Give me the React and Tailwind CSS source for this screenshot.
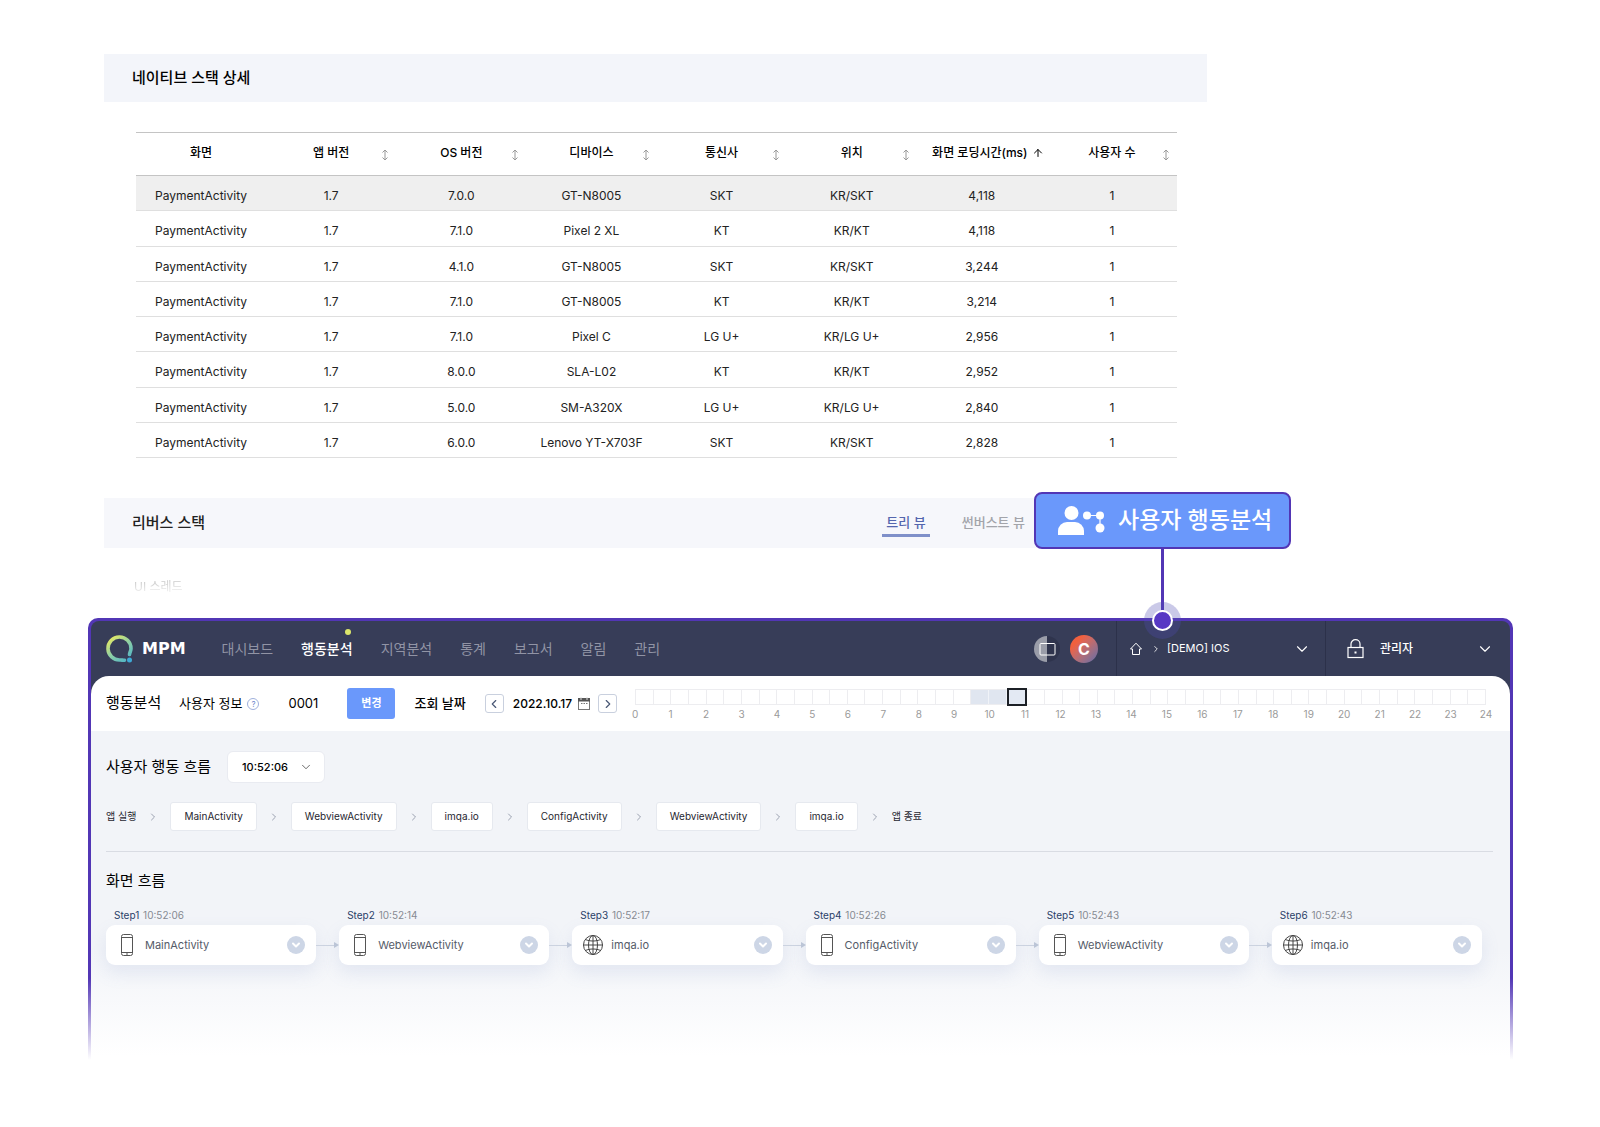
import React, { useState } from 'react';
import { ArrowUp, ChevronDown, ChevronLeft, ChevronRight } from 'lucide-react';

const columns = ['화면', '앱 버전', 'OS 버전', '디바이스', '통신사', '위치', '화면 로딩시간(ms)', '사용자 수'];

const rows = [
  ['PaymentActivity', '1.7', '7.0.0', 'GT-N8005', 'SKT', 'KR/SKT', '4,118', '1'],
  ['PaymentActivity', '1.7', '7.1.0', 'Pixel 2 XL', 'KT', 'KR/KT', '4,118', '1'],
  ['PaymentActivity', '1.7', '4.1.0', 'GT-N8005', 'SKT', 'KR/SKT', '3,244', '1'],
  ['PaymentActivity', '1.7', '7.1.0', 'GT-N8005', 'KT', 'KR/KT', '3,214', '1'],
  ['PaymentActivity', '1.7', '7.1.0', 'Pixel C', 'LG U+', 'KR/LG U+', '2,956', '1'],
  ['PaymentActivity', '1.7', '8.0.0', 'SLA-L02', 'KT', 'KR/KT', '2,952', '1'],
  ['PaymentActivity', '1.7', '5.0.0', 'SM-A320X', 'LG U+', 'KR/LG U+', '2,840', '1'],
  ['PaymentActivity', '1.7', '6.0.0', 'Lenovo YT-X703F', 'SKT', 'KR/SKT', '2,828', '1'],
];

const menus = ['대시보드', '행동분석', '지역분석', '통계', '보고서', '알림', '관리'];

const flow = ['MainActivity', 'WebviewActivity', 'imqa.io', 'ConfigActivity', 'WebviewActivity', 'imqa.io'];

const steps = [
  { name: 'MainActivity', time: '10:52:06', type: 'native' },
  { name: 'WebviewActivity', time: '10:52:14', type: 'native' },
  { name: 'imqa.io', time: '10:52:17', type: 'web' },
  { name: 'ConfigActivity', time: '10:52:26', type: 'native' },
  { name: 'WebviewActivity', time: '10:52:43', type: 'native' },
  { name: 'imqa.io', time: '10:52:43', type: 'web' },
];

const SortIcon = () => (
  <svg width="8" height="12" viewBox="0 0 8 12" fill="none" stroke="#999" strokeWidth="1">
    <path d="M4 1v10M1.5 3.5L4 1l2.500 2.500M1.500 8.500L4 11l2.500-2.500" />
  </svg>
);

const Logo = () => (
  <svg width="27" height="28" viewBox="0 0 27 28" fill="none">
    <defs>
      <linearGradient id="logoRing" x1="4" y1="2" x2="22" y2="26" gradientUnits="userSpaceOnUse">
        <stop offset="0" stopColor="#e9ea62" />
        <stop offset="0.5" stopColor="#8fd0a4" />
        <stop offset="1" stopColor="#4fb4c8" />
      </linearGradient>
    </defs>
    <path
      d="M18.500 25.200c-1.500.3-2.500-.3-4.500-.2A11.500 11.500 0 1 1 25 13.500c0 2.500-1.200 3.500-1.500 6"
      stroke="url(#logoRing)"
      strokeWidth="3.600"
      strokeLinecap="round"
    />
    <circle cx="23.500" cy="25" r="2.500" fill="#3fa9d6" />
  </svg>
);

const SplitIcon = () => (
  <svg width="28" height="28" viewBox="0 0 28 28" fill="none">
    <path d="M13 1a13 13 0 0 0 0 26z" fill="#9a9da9" />
    <path d="M13 1a13 13 0 0 1 0 26z" fill="#2f344d" />
    <rect x="6" y="8.500" width="15" height="11.500" rx="1" stroke="#fff" />
  </svg>
);

const HomeIcon = () => (
  <svg width="14" height="14" viewBox="0 0 14 14" fill="none" stroke="#fff" strokeWidth="1">
    <path d="M7 1.200L1.500 7H3.500v5.500h7V7h2z" strokeLinejoin="round" />
  </svg>
);

const LockIcon = () => (
  <svg width="17" height="20" viewBox="0 0 17 20" fill="none" stroke="#fff" strokeWidth="1.200">
    <rect x="1" y="8.500" width="15" height="10" />
    <path d="M4 8.500V5a4.500 4.300 0 0 1 9 0v3.500" />
    <rect x="7.500" y="12.500" width="2" height="2" fill="#fff" stroke="none" />
  </svg>
);

const CalendarIcon = () => (
  <svg width="12" height="13" viewBox="0 0 12 13" fill="none">
    <rect x="0.500" y="1.500" width="11" height="11" stroke="#777" />
    <path d="M0 1h12v3.500H0z" fill="#555" />
    <path d="M3 0v3M9 0v3" stroke="#ddd" />
    <path d="M3 6.500h1.500M5.500 6.500H7M8 6.500h1.500" stroke="#777" />
  </svg>
);

const PhoneIcon = () => (
  <svg width="20" height="22" viewBox="0 0 20 22" fill="none" stroke="#555" strokeWidth="1">
    <rect x="4.500" y="0.500" width="11" height="21" rx="2" />
    <path d="M4.500 3.500h11M4.500 18.500h11" />
    <path d="M9 20h2" />
  </svg>
);

const GlobeIcon = () => (
  <svg width="20" height="22" viewBox="0 0 20 22" fill="none" stroke="#444" strokeWidth="1">
    <circle cx="10" cy="11" r="9.500" />
    <ellipse cx="10" cy="11" rx="4.500" ry="9.500" />
    <path d="M10 1.500v19M0.500 11h19M2.500 5.500c4 2 11 2 15 0M2.500 16.500c4-2 11-2 15 0" />
  </svg>
);

const UserFlowIcon = () => (
  <svg width="48" height="30" viewBox="0 0 48 30" fill="#fff">
    <circle cx="13.500" cy="7" r="7" />
    <path d="M0 29v-4a9 9 0 0 1 9-9h8a9 9 0 0 1 9 9v4z" />
    <circle cx="29" cy="9.500" r="4" />
    <circle cx="42" cy="9.500" r="4" />
    <circle cx="42" cy="22" r="4.500" />
    <path d="M29 9.500h13V22" fill="none" stroke="#fff" strokeWidth="1.200" />
  </svg>
);

const NativeStack = () => (
  <section className="ml-[104px] mr-[393px]">
    <h2 className="flex h-12 items-center bg-[#f3f5fa] px-7 text-[15px] font-medium">네이티브 스택 상세</h2>
    <div className="mt-[30px] pl-8 pr-[30px]">
      <table className="h-[326px] w-full table-fixed border-collapse text-center text-xs">
        <thead>
          <tr className="h-[43px] border-y border-[#c4c4c4]">
            {columns.map((col, i) => (
              <th key={col} scope="col" className="relative p-0 pb-0.5 font-medium">
                {i === 6 ? (
                  <span className="flex items-center justify-center gap-1 whitespace-nowrap pl-3">
                    {col}
                    <button type="button" aria-label={`${col} 정렬`}>
                      <ArrowUp size={12} strokeWidth={2} />
                    </button>
                  </span>
                ) : (
                  col
                )}
                {i !== 0 && i !== 6 && (
                  <button type="button" aria-label={`${col} 정렬`} className="absolute right-[7px] top-4">
                    <SortIcon />
                  </button>
                )}
              </th>
            ))}
          </tr>
        </thead>
        <tbody>
          {rows.map((row, i) => (
            <tr key={i} className="h-[35px] border-b border-[#dfdfdf] first:bg-[#efefef]">
              {row.map((cell, j) => (
                <td key={j} className="whitespace-nowrap p-0 pt-1.5 text-[#222]">{cell}</td>
              ))}
            </tr>
          ))}
        </tbody>
      </table>
    </div>
  </section>
);

const ReverseStack = () => (
  <section className="ml-[104px] mr-[393px] mt-10">
    <div className="flex h-[50px] items-center bg-[#f6f7fb] pl-7 pr-[178px]">
      <h2 className="flex-1 text-[15px] font-medium text-[#222]">리버스 스택</h2>
      <div className="flex gap-7 text-[13px] font-medium">
        <button type="button" className="border-b-3 border-[#7f90c9] px-1 leading-6 text-[#5466ae]">트리 뷰</button>
        <button type="button" className="border-b-3 border-transparent px-1 leading-6 text-[#a2a4aa]">썬버스트 뷰</button>
      </div>
    </div>
    <p className="ml-[30px] mt-[29px] w-fit bg-gradient-to-b from-[#bbb] to-white bg-clip-text text-xs leading-5 text-transparent">UI 스레드</p>
  </section>
);

const TopBar = () => (
  <header className="flex h-[55px] items-stretch text-white">
    <div className="flex items-center gap-[9px] pl-[15px]">
      <Logo />
      <span className="font-['DejaVu_Sans',sans-serif] text-base font-bold">MPM</span>
    </div>
    <nav className="ml-9 flex flex-1 items-center gap-7 text-sm">
      {menus.map((menu, i) => (
        <a key={menu} href="#" className={i === 1 ? 'relative font-medium' : 'text-[#9194a5]'}>
          {menu}
          {i === 1 && <span className="absolute -top-2.5 right-0.5 size-1.5 rounded-full bg-[#dbe66b]" />}
        </a>
      ))}
    </nav>
    <div className="flex items-center gap-2 pr-[18px]">
      <button type="button" aria-label="화면 분할">
        <SplitIcon />
      </button>
      <button type="button" className="size-7 rounded-full bg-gradient-to-br from-[#f0603f] from-25% to-[#5b6aa8] font-bold leading-7">C</button>
    </div>
    <button type="button" className="flex w-[209px] items-center border-l border-[#2c314a] pl-3 pr-[14px] text-[11px]">
      <HomeIcon />
      <ChevronRight size={10} className="ml-2" />
      <span className="ml-1.5 flex-1 text-left">[DEMO] IOS</span>
      <ChevronDown size={18} strokeWidth={1.500} />
    </button>
    <button type="button" className="flex w-[185px] items-center border-l border-[#2c314a] pl-[21px] pr-4 text-xs">
      <LockIcon />
      <span className="ml-4 flex-1 text-left font-medium">관리자</span>
      <ChevronDown size={18} strokeWidth={1.500} />
    </button>
  </header>
);

const Timeline = () => (
  <div className="ml-[18px] mr-6 mt-1 flex-1">
    <div className="flex h-4 border-y border-l border-[#ededf0]">
      {Array.from({ length: 48 }, (_, i) => {
        if (i === 21) {
          return <span key={i} className="-my-0.5 flex-1 border-2 border-[#1c2026] bg-[#e3e9f3]" />;
        }
        return (
          <span key={i} className={i === 19 || i === 20 ? 'flex-1 border-r border-[#f0f3f8] bg-[#e0e6f0]' : 'flex-1 border-r border-[#ededf0]'} />
        );
      })}
    </div>
    <div className="flex justify-between text-[10px] leading-[18px] text-[#9a9a9a]">
      {Array.from({ length: 25 }, (_, hour) => (
        <span key={hour} className="flex w-0 justify-center">{hour}</span>
      ))}
    </div>
  </div>
);

const SearchBar = () => (
  <div className="flex h-[55px] items-center rounded-t-[18px] bg-white pl-[15px]">
    <h1 className="w-[73px] text-[15px]">행동분석</h1>
    <span className="text-[13px]">사용자 정보</span>
    <button type="button" aria-label="도움말" className="ml-[5px] size-3 rounded-full border border-[#9fb0dc] text-[8px] leading-[10px] text-[#6d86cc]">?</button>
    <span className="ml-[29px] w-[59px] text-[13px]">0001</span>
    <button type="button" className="h-[31px] w-12 rounded-[3px] bg-[#6a98fb] text-[11px] font-bold text-white">변경</button>
    <span className="ml-[19px] text-[13px] font-medium">조회 날짜</span>
    <button type="button" aria-label="이전 날짜" className="ml-[19px] flex size-[19px] items-center justify-center rounded-[3px] border border-[#c9d0de]">
      <ChevronLeft size={14} className="text-[#4a5876]" />
    </button>
    <span className="ml-[9px] text-xs font-medium">2022.10.17</span>
    <button type="button" aria-label="날짜 선택" className="ml-1.5">
      <CalendarIcon />
    </button>
    <button type="button" aria-label="다음 날짜" className="ml-2 flex size-[19px] items-center justify-center rounded-[3px] border border-[#c9d0de]">
      <ChevronRight size={14} className="text-[#4a5876]" />
    </button>
    <Timeline />
  </div>
);

const UserFlow = () => {
  const [time, setTime] = useState('10:52:06');

  return (
    <section className="mr-[17px] ml-[15px] border-b border-[#d9dce3] pt-5 pb-5">
      <div className="flex items-center">
        <label htmlFor="flow-time" className="text-[15px]">사용자 행동 흐름</label>
        <div className="relative ml-4">
          <select
            id="flow-time"
            value={time}
            onChange={(e) => setTime(e.target.value)}
            className="h-8 w-[98px] appearance-none rounded-md border border-[#e9ebf1] bg-white pl-[14px] text-[11px] font-medium"
          >
            {steps.slice(0, 5).map((step) => (
              <option key={step.time}>{step.time}</option>
            ))}
          </select>
          <ChevronDown size={14} strokeWidth={1} className="pointer-events-none absolute right-3 top-[9px]" />
        </div>
      </div>
      <div className="mt-[19px] flex items-center text-[10px] text-[#1f2630]">
        <span>앱 실행</span>
        {flow.map((name, i) => (
          <React.Fragment key={i}>
            <ChevronRight size={12} strokeWidth={1.500} className="mx-[11px] text-[#7d8698]" />
            <span className="h-[29px] rounded-[3px] border border-[#e6e9ef] bg-white px-[13px] leading-[27px]">{name}</span>
          </React.Fragment>
        ))}
        <ChevronRight size={12} strokeWidth={1.500} className="mx-[11px] text-[#7d8698]" />
        <span>앱 종료</span>
      </div>
    </section>
  );
};

const StepFlow = () => (
  <section className="pt-[17px] pr-7 pl-[15px]">
    <h2 className="text-[15px] leading-6">화면 흐름</h2>
    <ol className="mt-[14px] flex">
      {steps.map((step, i) => (
        <React.Fragment key={i}>
          {i > 0 && (
            <li aria-hidden="true" className="mt-[34px] flex h-2 w-[23px] items-center">
              <span className="h-px flex-1 bg-[#ccd3e0]" />
              <span className="border-y-3 border-l-5 border-y-transparent border-l-[#bfc8d8]" />
            </li>
          )}
          <li className="flex-1">
            <p className="px-2 pb-0.5 text-[10px] leading-4 text-[#868a92]">
              <span className="mr-px text-[#2b4168]">Step{i + 1}</span> {step.time}
            </p>
            <div className="flex h-10 items-center rounded-[9px] bg-white px-[11px] shadow-[0_8px_18px_rgba(120,145,200,0.14)]">
              {step.type === 'native' ? <PhoneIcon /> : <GlobeIcon />}
              <span className="ml-2 flex-1 text-[11px] text-[#555b68]">{step.name}</span>
              <button type="button" aria-label={`${step.name} 펼치기`} className="flex size-[18px] items-center justify-center rounded-full bg-[#cdd6e6] text-white">
                <ChevronDown size={12} strokeWidth={4} />
              </button>
            </div>
          </li>
        </React.Fragment>
      ))}
    </ol>
  </section>
);

const Callout = () => (
  <div className="absolute -top-[126px] right-[222px] flex w-[257px] flex-col items-center">
    <div className="flex h-[57px] w-full items-center rounded-lg border-2 border-[#5236b5] bg-[#6a98fb] pl-[22px] text-[23px] font-medium text-white">
      <UserFlowIcon />
      <span className="ml-3 whitespace-nowrap">사용자 행동분석</span>
    </div>
    <span className="h-[61px] w-[3px] bg-[#5236b5]" />
    <span className="size-[21px] rounded-full border-2 border-white bg-[#5738c4] shadow-[0_0_0_8px_rgba(80,75,180,0.3)]" />
  </div>
);

const App = () => {
  return (
    <main className="bg-white pt-[54px] font-['Inter','Noto_Sans_CJK_KR',sans-serif] text-black">
      <NativeStack />
      <ReverseStack />
      <div className="relative mt-[21px] mr-[87px] ml-[88px] rounded-t-[10px] bg-[linear-gradient(to_bottom,#5236b5_360px,transparent_442px)] px-[3px] pt-[3px]">
        <div className="h-[439px] rounded-t-[8px] bg-[linear-gradient(to_bottom,#373d58_110px,#f2f4f8_110px,#f2f4f8_330px,#ffffff_435px)]">
          <TopBar />
          <SearchBar />
          <UserFlow />
          <StepFlow />
        </div>
        <Callout />
      </div>
    </main>
  );
};

export default App;
